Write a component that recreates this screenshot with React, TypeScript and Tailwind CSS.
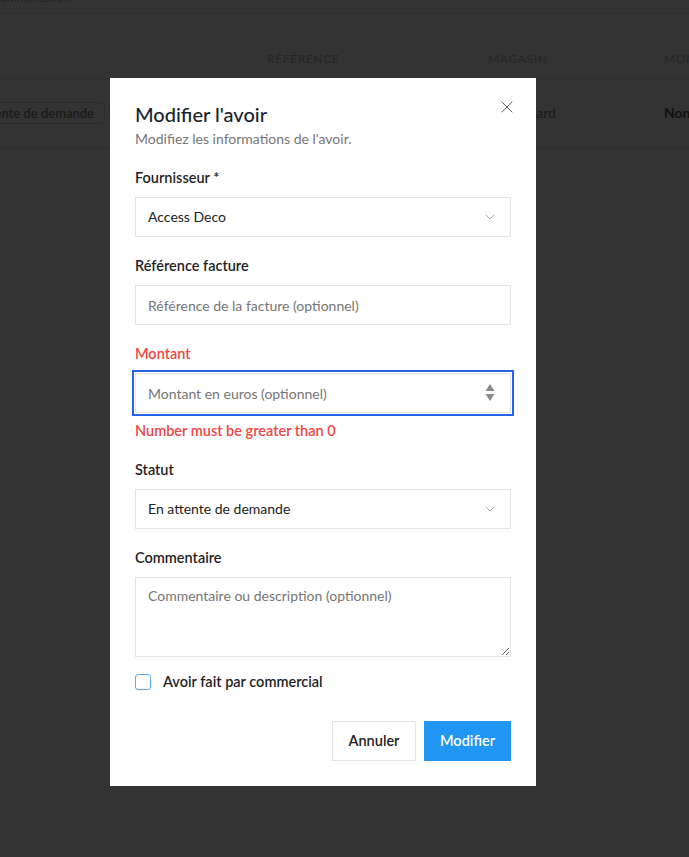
import React, { useState } from 'react';
import { ChevronDown, X } from 'lucide-react';

const font = { fontFamily: 'Lato, "Noto Sans", sans-serif' };

const SelectBox: React.FC<{ value: string }> = ({ value }) => (
  <div className="relative h-10 w-full border border-[#e5e5e5] bg-white flex items-center px-3">
    <span className="text-sm text-[#222]">{value}</span>
    <ChevronDown size={16} strokeWidth={1.3} className="absolute right-3 top-1/2 -translate-y-1/2 text-[#9a9a9a]" />
  </div>
);

const Label: React.FC<{ children: React.ReactNode; error?: boolean }> = ({ children, error }) => (
  <label className={`block text-[14.5px] leading-5 font-semibold mb-[9px] ${error ? 'text-[#ef4444]' : 'text-[#1f1f1f]'}`}>
    {children}
  </label>
);

const Background = () => (
  <div className="w-full text-[#1c1c1c]">
    <div className="h-[14px] border-b border-[#2d2d2d] overflow-hidden">
      <div className="text-xs leading-4 -mt-[10px] text-[#222]">ommentaire...</div>
    </div>
    <div className="h-[65px] border-b border-[#2d2d2d] flex items-end pb-[11px] text-xs font-semibold uppercase tracking-wider text-[#272727] whitespace-nowrap">
      <div className="ml-[267px] w-[221px] shrink-0">Référence</div>
      <div className="w-[176px] shrink-0">Magasin</div>
      <div className="shrink-0">Montant</div>
    </div>
    <div className="h-[69px] border-b border-[#2d2d2d] flex items-center text-sm whitespace-nowrap">
      <div className="-ml-[67px] w-[172px] h-[22px] shrink-0 border border-[#2a2a2a] rounded-sm flex items-center justify-end pr-[10px] text-[13px] font-semibold text-[#1a1a1a]">
        En attente de demande
      </div>
      <div className="ml-[403px] w-[156px] shrink-0 text-[#1a1a1a]">Brocard</div>
      <div className="shrink-0 font-bold text-[#111]">Non</div>
    </div>
  </div>
);

export default function App() {
  const [commercial, setCommercial] = useState(false);

  return (
    <div className="relative min-h-[857px] w-full overflow-hidden bg-[#333333]" style={font}>
      <Background />

      <div className="absolute left-[110px] top-[78px] w-[426px] bg-white px-[25px] pt-[22px] pb-[25px]">
        <button className="absolute right-[19px] top-[19px] text-[#555]">
          <X size={20} strokeWidth={1.1} />
        </button>

        <h2 className="text-xl leading-7 font-medium text-[#1a1f2e]">Modifier l'avoir</h2>
        <p className="text-sm leading-5 mt-px text-[#767676]">Modifiez les informations de l'avoir.</p>

        <div className="mt-[19px]">
          <Label>Fournisseur *</Label>
          <SelectBox value="Access Deco" />
        </div>

        <div className="mt-[19px]">
          <Label>Référence facture</Label>
          <input
            type="text"
            placeholder="Référence de la facture (optionnel)"
            className="h-10 w-full border border-[#e5e5e5] px-3 text-sm text-[#222] placeholder:text-[#767676] outline-none"
          />
        </div>

        <div className="mt-[19px]">
          <Label error>Montant</Label>
          <div className="relative">
            <input
              type="text"
              placeholder="Montant en euros (optionnel)"
              className="h-10 w-full border border-[#e5e5e5] px-3 text-sm text-[#222] placeholder:text-[#767676] outline-2 outline-offset-1 outline-[#2563eb]"
            />
            <svg width="10" height="20" viewBox="0 0 10 20" className="absolute right-[16px] top-[10px] text-[#8a8a8a]">
              <path d="M5 1 L9.5 8 L0.5 8 Z" fill="currentColor" />
              <path d="M0.5 11 L9.5 11 L5 18 Z" fill="currentColor" />
            </svg>
          </div>
          <p className="mt-2 text-[14.5px] leading-5 font-semibold text-[#ef4444]">Number must be greater than 0</p>
        </div>

        <div className="mt-[19px]">
          <Label>Statut</Label>
          <SelectBox value="En attente de demande" />
        </div>

        <div className="mt-[19px]">
          <Label>Commentaire</Label>
          <textarea
            placeholder="Commentaire ou description (optionnel)"
            className="block h-20 w-full border border-[#e5e5e5] px-3 py-2 text-sm text-[#222] placeholder:text-[#767676] outline-none"
          />
        </div>

        <label className="mt-[15px] flex items-center gap-3 h-5 cursor-pointer">
          <input
            type="checkbox"
            checked={commercial}
            onChange={e => setCommercial(e.target.checked)}
            className="appearance-none w-4 h-4 rounded-[3px] border-[1.5px] border-[#5aa7f0] bg-white checked:bg-[#2196f3] shrink-0"
          />
          <span className="text-[14.5px] font-semibold text-[#1f1f1f]">Avoir fait par commercial</span>
        </label>

        <div className="mt-[29px] flex justify-end gap-2">
          <button className="h-10 w-[84px] border border-[#e5e5e5] bg-white text-[14.5px] font-semibold text-[#222]">
            Annuler
          </button>
          <button className="h-10 w-[87px] bg-[#2196f3] text-[14.5px] font-semibold text-white">
            Modifier
          </button>
        </div>
      </div>
    </div>
  );
}
